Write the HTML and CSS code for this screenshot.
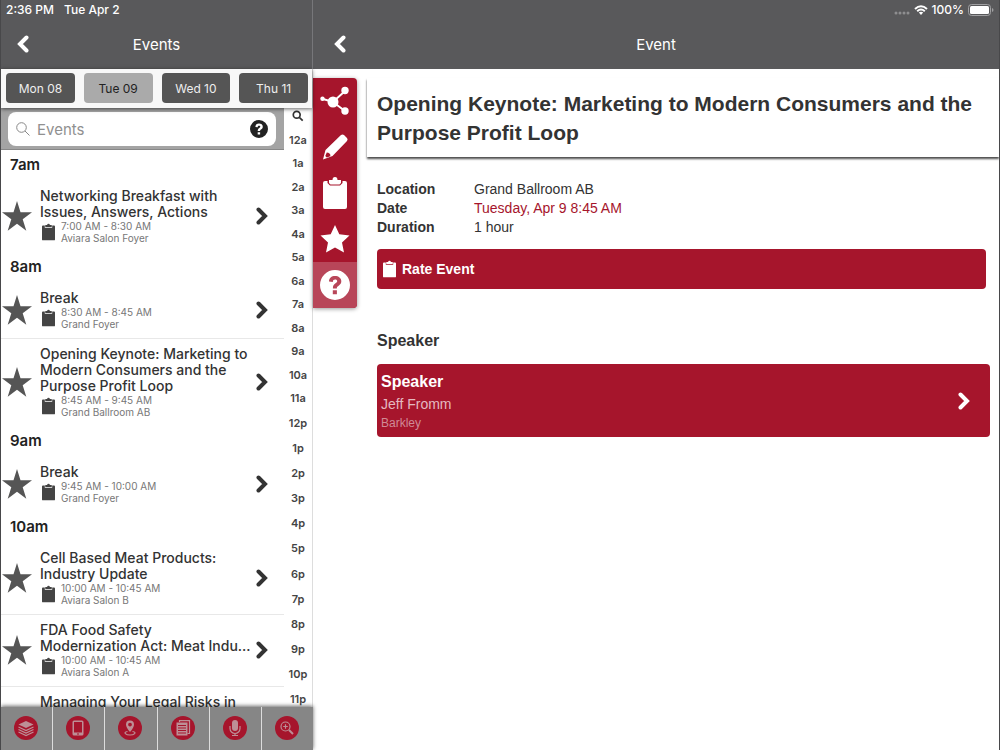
FILE: index.html
```html
<!DOCTYPE html>
<html lang="en">
<head>
  <meta charset="UTF-8">
  <title>Event</title>
  <link rel="stylesheet" href="styles.css">
</head>
<body>
<svg class="defs" aria-hidden="true">
  <symbol id="star" viewBox="0 0 30 30"><path d="M15 0l3.500 11.200H30l-9.300 7 3.600 11.500L15 22.700l-9.300 7 3.600-11.500L0 11.200h11.500z"/></symbol>
  <symbol id="star-fat" viewBox="0 0 30 30"><path d="M15 1l4.300 9.300 10.200 1.200-7.500 7 2 10L15 23.500l-9 5 2-10-7.500-7 10.200-1.200z"/></symbol>
  <symbol id="clipboard" viewBox="0 0 14 18"><path d="M1 2h2v2.500h8V2h2q1 0 1 1v14q0 1-1 1H1q-1 0-1-1V3q0-1 1-1z"/><path d="M3.500 1.500h2Q5.700 0 7 0t1.500 1.500h2v2h-7z"/></symbol>
  <symbol id="next" viewBox="0 0 12 18"><path d="M2.500 2.500L9 9l-6.500 6.500" fill="none" stroke="currentColor" stroke-width="4" stroke-linecap="round"/></symbol>
  <symbol id="back" viewBox="0 0 12 18"><path d="M9.500 2.500L3 9l6.500 6.500" fill="none" stroke="currentColor" stroke-width="4" stroke-linecap="round"/></symbol>
  <symbol id="help" viewBox="0 0 30 30"><path fill-rule="evenodd" d="M15 0a15 15 0 1 0 0 30a15 15 0 0 0 0-30zM9 11.500C9 8 11.500 6 15 6s6.300 2 6.300 5.200c0 2.500-1.400 3.600-2.900 4.700-1.200.8-1.600 1.300-1.600 2.600h-3.900c0-2.900.8-3.900 2.600-5.200 1.100-.8 1.700-1.200 1.700-2 0-1-.8-1.700-2.100-1.700-1.400 0-2.200.7-2.300 2.300zM12.800 20.300h4.100v4h-4.100z"/></symbol>
</svg>

<div id="app">
  <div id="list-pane">
    <header class="bar">
      <div class="status"><span>2:36 PM</span><span>Tue Apr 2</span></div>
      <div class="title">
        <button class="back" aria-label="Back"><svg><use href="#back"/></svg></button>
        <h1>Events</h1>
      </div>
    </header>

    <div id="days">
      <button>Mon 08</button>
      <button class="on">Tue 09</button>
      <button>Wed 10</button>
      <button>Thu 11</button>
    </div>

    <div id="content">
      <div id="events">
        <div class="search">
          <div class="field">
            <svg class="glass" viewBox="0 0 14 14"><circle cx="5.500" cy="5.500" r="4.800"/><path d="M9 9l4.500 4.500"/></svg>
            <input type="text" placeholder="Events" aria-label="Search events">
            <button aria-label="Help"><svg><use href="#help"/></svg></button>
          </div>
        </div>

        <h2>7am</h2>
        <ul>
          <li>
            <svg class="star"><use href="#star"/></svg>
            <div class="info">
              <h3>Networking Breakfast with Issues, Answers, Actions</h3>
              <div class="meta"><svg><use href="#clipboard"/></svg><p>7:00 AM - 8:30 AM<br>Aviara Salon Foyer</p></div>
            </div>
            <svg class="next"><use href="#next"/></svg>
          </li>
        </ul>

        <h2>8am</h2>
        <ul>
          <li>
            <svg class="star"><use href="#star"/></svg>
            <div class="info">
              <h3>Break</h3>
              <div class="meta"><svg><use href="#clipboard"/></svg><p>8:30 AM - 8:45 AM<br>Grand Foyer</p></div>
            </div>
            <svg class="next"><use href="#next"/></svg>
          </li>
          <li>
            <svg class="star"><use href="#star"/></svg>
            <div class="info">
              <h3>Opening Keynote: Marketing to Modern Consumers and the Purpose Profit Loop</h3>
              <div class="meta"><svg><use href="#clipboard"/></svg><p>8:45 AM - 9:45 AM<br>Grand Ballroom AB</p></div>
            </div>
            <svg class="next"><use href="#next"/></svg>
          </li>
        </ul>

        <h2>9am</h2>
        <ul>
          <li>
            <svg class="star"><use href="#star"/></svg>
            <div class="info">
              <h3>Break</h3>
              <div class="meta"><svg><use href="#clipboard"/></svg><p>9:45 AM - 10:00 AM<br>Grand Foyer</p></div>
            </div>
            <svg class="next"><use href="#next"/></svg>
          </li>
        </ul>

        <h2>10am</h2>
        <ul>
          <li>
            <svg class="star"><use href="#star"/></svg>
            <div class="info">
              <h3>Cell Based Meat Products: Industry Update</h3>
              <div class="meta"><svg><use href="#clipboard"/></svg><p>10:00 AM - 10:45 AM<br>Aviara Salon B</p></div>
            </div>
            <svg class="next"><use href="#next"/></svg>
          </li>
          <li>
            <svg class="star"><use href="#star"/></svg>
            <div class="info">
              <h3>FDA Food Safety<br>Modernization Act: Meat Indu...</h3>
              <div class="meta"><svg><use href="#clipboard"/></svg><p>10:00 AM - 10:45 AM<br>Aviara Salon A</p></div>
            </div>
            <svg class="next"><use href="#next"/></svg>
          </li>
          <li>
            <div class="info last">
              <h3>Managing Your Legal Risks in</h3>
            </div>
          </li>
        </ul>
      </div>

      <div id="hours">
        <svg viewBox="0 0 14 14"><circle cx="5.500" cy="5.500" r="4"/><path d="M8.500 8.500l4 4"/></svg>
        <ul class="am">
          <li>12a</li><li>1a</li><li>2a</li><li>3a</li><li>4a</li><li>5a</li>
          <li>6a</li><li>7a</li><li>8a</li><li>9a</li><li>10a</li><li>11a</li>
        </ul>
        <ul class="pm">
          <li>12p</li><li>1p</li><li>2p</li><li>3p</li><li>4p</li><li>5p</li>
          <li>6p</li><li>7p</li><li>8p</li><li>9p</li><li>10p</li><li>11p</li>
        </ul>
      </div>
    </div>

    <nav>
      <button aria-label="Sessions"><svg viewBox="0 0 24 24"><path class="fill" d="M12 5l7.500 3.500L12 12 4.500 8.500z"/><path d="M4.500 11l7.500 3.500 7.500-3.500M4.500 13.500L12 17l7.500-3.500M4.500 16l7.500 3.500 7.500-3.500"/></svg></button>
      <button aria-label="App"><svg viewBox="0 0 24 24"><path class="fill" fill-rule="evenodd" d="M8 4.500h8q1.500 0 1.500 1.500v12q0 1.500-1.500 1.500H8q-1.500 0-1.500-1.500V6Q6.500 4.500 8 4.500zM8 6v10.500h8V6zM11.300 17.300v1.400h1.400v-1.400z"/></svg></button>
      <button aria-label="Map"><svg viewBox="0 0 24 24"><path class="fill" fill-rule="evenodd" d="M12 4.500a4 4 0 0 0-4 4c0 3 4 7.500 4 7.500s4-4.500 4-7.500a4 4 0 0 0-4-4zm0 2.200a1.900 1.900 0 1 1 0 3.800 1.900 1.900 0 0 1 0-3.800z"/><path d="M9.500 15.500c-5 1 -1.500 3.500 2.500 3.500s7.500-2.500 2.500-3.500"/></svg></button>
      <button aria-label="Documents"><svg viewBox="0 0 24 24"><path d="M8.500 6V4.700h10v12.800h-2"/><path class="fill" fill-rule="evenodd" d="M5.500 6.500h11v13h-11zM7 9v1h8V9zm0 2.500v1h8v-1zM7 14v1h8v-1zm0 2.500v1h8v-1z"/></svg></button>
      <button aria-label="Speakers"><svg viewBox="0 0 24 24"><rect class="fill" x="9" y="4" width="6" height="11" rx="3"/><path d="M7 10v2.500a5 5 0 0 0 10 0V10M12 17.500v2M9 19.500h6"/></svg></button>
      <button aria-label="Search"><svg viewBox="0 0 24 24"><circle cx="10.500" cy="10.500" r="4.500"/><path d="M10.500 8.200v4.600M8.200 10.500h4.600"/><path class="thick" d="M14 14l4 4"/></svg></button>
    </nav>
  </div>

  <div id="event-pane">
    <header class="bar">
      <div class="status right">
        <svg class="dots" viewBox="0 0 16 4"><circle cx="2" cy="2" r="1.500"/><circle cx="6" cy="2" r="1.500"/><circle cx="10" cy="2" r="1.500"/><circle cx="14" cy="2" r="1.500"/></svg>
        <svg class="wifi" viewBox="0 0 14 10"><path d="M1 4q6-5.500 12 0M3.200 6.200q3.800-3.300 7.600 0"/><path class="tip" d="M4.800 7.600q2.200-1.700 4.400 0L7 10z"/></svg>
        <span>100%</span>
        <svg class="battery" viewBox="0 0 26 12"><rect class="case" x=".5" y=".5" width="22" height="11" rx="3"/><rect x="2" y="2" width="19" height="8" rx="1.500"/><path class="cap" d="M24 4q1.500.5 1.500 2T24 8z"/></svg>
      </div>
      <div class="title">
        <button class="back" aria-label="Back"><svg><use href="#back"/></svg></button>
        <h1>Event</h1>
      </div>
    </header>

    <div id="event">
      <div id="tools">
        <button aria-label="Share"><svg viewBox="0 0 30 30"><path d="M3 13l10 3L25 5M13 16l12 9" fill="none" stroke="currentColor" stroke-width="2"/><circle cx="13" cy="16" r="5.500"/><circle cx="25" cy="4.500" r="3.700"/><circle cx="25" cy="25" r="3.700"/><circle cx="2.500" cy="12.700" r="2.200"/></svg></button>
        <button aria-label="Notes"><svg viewBox="0 0 30 30"><path fill-rule="evenodd" d="M21 3q1.500-1.200 3 0l3 3q1.200 1.500 0 3L12.500 24 3 27.500 5.500 18zM6.800 20.500l-1.500 3.600 1.500 1.400 3.500-1.200q.5-1.700-.8-2.800-1.200-1-2.700-1z"/></svg></button>
        <button aria-label="Survey"><svg viewBox="0 0 24 32"><path d="M2 4h2.500v2l2.500 2.500h10L19.500 6V4H22q2 0 2 2v24q0 2-2 2H2q-2 0-2-2V6q0-2 2-2z"/><path d="M6 3h3.500q0-3 2.500-3t2.500 3H18v3l-1.500 1.500h-9L6 6z"/></svg></button>
        <button aria-label="Favorite"><svg><use href="#star-fat"/></svg></button>
        <button class="on" aria-label="Help"><svg><use href="#help"/></svg></button>
      </div>

      <main>
        <h2 class="name">Opening Keynote: Marketing to Modern Consumers and the Purpose Profit Loop</h2>
        <div class="details">
          <dl>
            <dt>Location</dt><dd>Grand Ballroom AB</dd>
            <dt>Date</dt><dd class="date">Tuesday, Apr 9 8:45 AM</dd>
            <dt>Duration</dt><dd>1 hour</dd>
          </dl>
          <button class="rate"><svg><use href="#clipboard"/></svg>Rate Event</button>
          <h3>Speaker</h3>
          <a class="speaker" href="#speaker">
            <div>
              <h4>Speaker</h4>
              <p>Jeff Fromm</p>
              <small>Barkley</small>
            </div>
            <svg class="next"><use href="#next"/></svg>
          </a>
        </div>
      </main>
    </div>
  </div>
</div>
</body>
</html>
```
FILE: styles.css
```css
*{padding: 0; margin: 0; box-sizing: border-box;}
li{list-style: none;}
button{border: 0; background: none; font: inherit; color: inherit; cursor: pointer;}
svg{display: block; fill: currentColor; flex: none;}
.defs{position: absolute; width: 0; height: 0;}
body{
  font-family: Inter, "Liberation Sans", sans-serif;
  color: #333;
  background: #fff;
}
#app{
  display: flex;
  height: 100vh;
  overflow: hidden;
  border-left: 1px solid #48484a;
  border-right: 1px solid #48484a;
}
#list-pane{
  display: flex;
  flex-direction: column;
  width: 312px;
  flex: none;
  border-right: 1px solid #ddd;
}
#event-pane{
  flex: 1;
  min-width: 0;
  display: flex;
  flex-direction: column;
}

/* header */
.bar{
  flex: none;
  height: 69px;
  background: #59595b;
  color: #fff;
}
#list-pane .bar{
  margin-right: -1px;
  border-right: 1px solid #77777a;
}
.status{
  display: flex;
  gap: 10px;
  height: 20px;
  padding: 0 5px;
  font-size: 12px;
  line-height: 20px;
  font-weight: 500;
}
.status.right{
  justify-content: flex-end;
  align-items: center;
  gap: 4px;
}
.dots{width: 16px; height: 4px; margin-top: 6px; color: #8e8e90;}
.wifi{width: 14px; height: 10px; fill: none; stroke: #fff; stroke-width: 2;}
.wifi .tip{fill: #fff; stroke: none;}
.battery{width: 26px; height: 12px;}
.battery .case{fill: none; stroke: #a0a0a2;}
.battery .cap{fill: #a0a0a2;}
.title{
  display: flex;
  align-items: center;
  height: 48px;
  padding: 0 16px;
}
.title h1{
  flex: 1;
  margin-right: 12px;
  font-size: 15px;
  font-weight: 400;
  text-align: center;
}
#event-pane .title{padding: 0 21px;}
.back svg{width: 12px; height: 18px;}

/* day tabs */
#days{
  position: relative;
  z-index: 1;
  display: flex;
  flex: none;
  gap: 9px;
  padding: 4px 4px 4px 5px;
  height: 39px;
  background: #f8f8f8;
  box-shadow: 0 1px 4px rgba(0,0,0,.6);
}
#days button{
  flex: 1;
  height: 30px;
  border-radius: 4px;
  background: #555;
  color: #eee;
  font-size: 12px;
}
#days button.on{
  background: #aaa;
  color: #222;
}

#content{
  flex: 1;
  min-height: 0;
  display: flex;
}
#events{
  flex: 1;
  min-width: 0;
  overflow: hidden;
}
.search{
  height: 42px;
  padding: 4px 8px 4px 7px;
  background: #a4a4a4;
  border-bottom: 1px solid #888;
}
.field{
  display: flex;
  align-items: center;
  gap: 7px;
  height: 34px;
  padding: 0 8px;
  border-radius: 8px;
  background: #fff;
}
.field input{
  flex: 1;
  min-width: 0;
  border: 0;
  outline: 0;
  font: inherit;
  font-size: 15px;
  background: none;
}
.field input::placeholder{color: #909090;}
.field button svg{width: 18px; height: 18px; color: #222;}
.glass{width: 14px; height: 14px; fill: none; stroke: #888;}

#events h2{
  padding-left: 9px;
  font-size: 15px;
  line-height: 30px;
  font-weight: 600;
  color: #222;
}
#events li{
  display: flex;
  align-items: center;
  padding: 8px 16px 8px 1px;
}
#events li + li{
  padding-top: 7px;
  border-top: 1px solid #e8e8e8;
}
.star{width: 30px; height: 30px; color: #555;}
.info{
  flex: 1;
  min-width: 0;
  margin-left: 8px;
}
.info.last{margin-left: 38px;}
.info h3{
  font-size: 14px;
  line-height: 16px;
  font-weight: 500;
  color: #333;
}
.meta{
  display: flex;
  gap: 6px;
  padding-left: 2px;
  font-size: 10px;
  line-height: 12px;
  color: #777;
}
.meta svg{width: 13px; height: 18px; margin-top: 3px; color: #444;}
.next{width: 12px; height: 18px; color: #333;}

/* hour index */
#hours{
  width: 28px;
  padding-top: 2px;
  font-size: 11px;
  font-weight: 600;
  text-align: center;
  color: #444;
}
#hours svg{
  width: 12px;
  height: 12px;
  margin: 0 auto 6px;
  fill: none;
  stroke: #333;
  stroke-width: 2;
}
#hours ul{
  display: flex;
  flex-direction: column;
}
#hours li{
  flex: 1;
  display: flex;
  align-items: center;
  justify-content: center;
}
.am{height: 282px;}
.pm{height: 302px;}

/* bottom menu */
nav{
  position: relative;
  display: flex;
  flex: none;
  height: 43px;
  margin-right: -1px;
  background: #868686;
  box-shadow: 0 -1px 4px rgba(0,0,0,.6);
}
nav button{
  flex: 1;
  display: flex;
  align-items: center;
  justify-content: center;
  padding: 0 1px 2px 0;
}
nav button + button{
  border-left: 1px solid #ddd;
}
nav svg{
  width: 24px;
  height: 24px;
  border-radius: 50%;
  background: #a6152c;
  fill: none;
  stroke: #bd8f96;
  stroke-width: 1.200;
}
nav .fill{fill: #bd8f96; stroke: none;}
nav .thick{stroke-width: 2;}

/* event */
#event{
  flex: 1;
  display: flex;
  align-items: flex-start;
  gap: 10px;
  padding-top: 9px;
  font-family: "Liberation Sans", Arial, sans-serif;
}
#tools{
  flex: none;
  width: 44px;
  border-radius: 0 4px 4px 0;
  background: #a6152c;
  color: #fff;
  overflow: hidden;
  box-shadow: 0 1px 4px rgba(0,0,0,.4);
}
#tools button{
  display: flex;
  align-items: center;
  justify-content: center;
  width: 44px;
  height: 46px;
}
#tools button.on{background: #b84659;}
#tools svg{width: 30px; height: 32px;}
main{
  flex: 1;
  min-width: 0;
}
.name{
  padding: 11px 0 10px 10px;
  font-size: 21px;
  line-height: 29px;
  box-shadow: 0 2px 2px rgba(0,0,0,.7);
}
.details{
  padding: 23px 9px 0 10px;
}
dl{
  display: grid;
  grid-template-columns: 97px 1fr;
  font-size: 14px;
  line-height: 19px;
}
dt{font-weight: bold;}
.date{color: #a6152c;}
.rate{
  display: flex;
  align-items: center;
  gap: 6px;
  width: calc(100% - 4px);
  height: 40px;
  margin-top: 12px;
  padding-left: 6px;
  border-radius: 4px;
  background: #a6152c;
  color: #fff;
  font-size: 14px;
  font-weight: bold;
}
.rate svg{width: 13px; height: 18px;}
.details h3{
  margin: 42px 0 13px;
  font-size: 16px;
  line-height: 20px;
}
.speaker{
  display: flex;
  align-items: center;
  justify-content: space-between;
  height: 73px;
  padding: 0 20px 0 4px;
  border-radius: 4px;
  background: #a6152c;
  color: #fff;
  text-decoration: none;
}
.speaker h4{font-size: 16px; line-height: 24px;}
.speaker p{font-size: 14px; line-height: 20px; color: #e4b9c0;}
.speaker small{display: block; font-size: 12px; line-height: 18px; color: #d08a95;}
.speaker .next{color: #fff;}
```
